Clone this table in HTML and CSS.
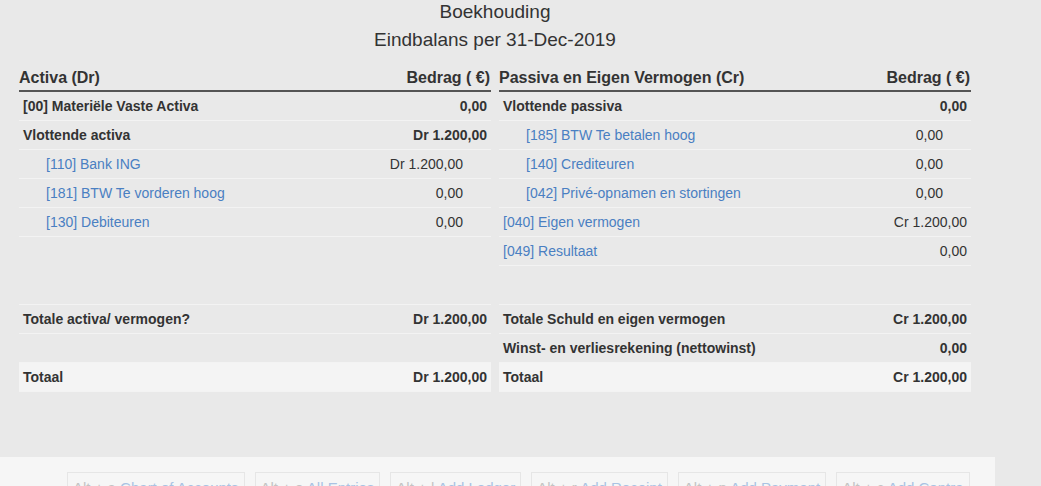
FILE: index.html
```html
<!DOCTYPE html>
<html lang="nl">
<head>
<meta charset="utf-8">
<title>Boekhouding</title>
<link rel="stylesheet" href="styles.css">
</head>
<body>
<div class="page">
  <div class="titles">
    <div class="title">Boekhouding</div>
    <div class="subtitle">Eindbalans per 31-Dec-2019</div>
  </div>

  <div class="cols">
    <table class="tbl">
      <thead>
        <tr><th class="name">Activa (Dr)</th><th class="amt">Bedrag ( €)</th></tr>
      </thead>
      <tbody>
        <tr class="grp"><td>[00] Materiële Vaste Activa</td><td class="amt">0,00</td></tr>
        <tr class="grp"><td>Vlottende activa</td><td class="amt">Dr 1.200,00</td></tr>
        <tr class="sub"><td><a href="#">[110] Bank ING</a></td><td class="amt">Dr 1.200,00</td></tr>
        <tr class="sub"><td><a href="#">[181] BTW Te vorderen hoog</a></td><td class="amt">0,00</td></tr>
        <tr class="sub"><td><a href="#">[130] Debiteuren</a></td><td class="amt">0,00</td></tr>
      </tbody>
    </table>
    <table class="tbl">
      <thead>
        <tr><th class="name">Passiva en Eigen Vermogen (Cr)</th><th class="amt">Bedrag ( €)</th></tr>
      </thead>
      <tbody>
        <tr class="grp"><td>Vlottende passiva</td><td class="amt">0,00</td></tr>
        <tr class="sub"><td><a href="#">[185] BTW Te betalen hoog</a></td><td class="amt">0,00</td></tr>
        <tr class="sub"><td><a href="#">[140] Crediteuren</a></td><td class="amt">0,00</td></tr>
        <tr class="sub"><td><a href="#">[042] Privé-opnamen en stortingen</a></td><td class="amt">0,00</td></tr>
        <tr class="top"><td><a href="#">[040] Eigen vermogen</a></td><td class="amt">Cr 1.200,00</td></tr>
        <tr class="top"><td><a href="#">[049] Resultaat</a></td><td class="amt">0,00</td></tr>
      </tbody>
    </table>
  </div>

  <div class="cols totals">
    <table class="tot">
      <tbody>
        <tr><td>Totale activa/ vermogen?</td><td class="amt">Dr 1.200,00</td></tr>
        <tr><td>&nbsp;</td><td class="amt">&nbsp;</td></tr>
        <tr class="sum"><td>Totaal</td><td class="amt">Dr 1.200,00</td></tr>
      </tbody>
    </table>
    <table class="tot">
      <tbody>
        <tr><td>Totale Schuld en eigen vermogen</td><td class="amt">Cr 1.200,00</td></tr>
        <tr><td>Winst- en verliesrekening (nettowinst)</td><td class="amt">0,00</td></tr>
        <tr class="sum"><td>Totaal</td><td class="amt">Cr 1.200,00</td></tr>
      </tbody>
    </table>
  </div>
</div>

<div class="footer">
  <span class="key">Alt + a <a href="#">Chart of Accounts</a></span>
  <span class="key">Alt + e <a href="#">All Entries</a></span>
  <span class="key">Alt + l <a href="#">Add Ledger</a></span>
  <span class="key">Alt + r <a href="#">Add Receipt</a></span>
  <span class="key">Alt + p <a href="#">Add Payment</a></span>
  <span class="key">Alt + c <a href="#">Add Contra</a></span>
</div>
</body>
</html>
```

FILE: styles.css
```css
html, body {
  margin: 0;
  padding: 0;
  background: #e9e9e9;
  font-family: "Liberation Sans", Arial, sans-serif;
  color: #333;
  font-size: 14px;
  overflow: hidden;
}

.page {
  width: 952px;
  margin-left: 19px;
}

.titles {
  text-align: center;
  font-size: 19px;
  color: #333;
}
.title { line-height: 24px; }
.subtitle { line-height: 24px; margin-top: 4px; }

.cols {
  display: grid;
  grid-template-columns: 472px 472px;
  column-gap: 8px;
  align-items: start;
  margin-top: 11px;
}

.totals {
  margin-top: 38px;
}

table {
  border-collapse: collapse;
  width: 100%;
}

.tbl th {
  font-size: 16px;
  font-weight: bold;
  text-align: left;
  line-height: 20px;
  padding: 5px 1px 2px 0;
  border-bottom: 2px solid #555;
}
.tbl th.amt { text-align: right; }

td {
  line-height: 20px;
  padding: 4px 4px;
  white-space: nowrap;
}
td.amt { text-align: right; }

.tbl td {
  border-bottom: 1px solid #f3f3f3;
}

.grp td { font-weight: bold; }

.sub td:first-child { padding-left: 27px; }
.sub td.amt { padding-right: 28px; }

a {
  color: #4a7fc2;
  text-decoration: none;
}

.tot td {
  font-weight: bold;
  border-top: 1px solid #f3f3f3;
  border-bottom: 1px solid #f3f3f3;
}
.tot .sum td { background: #f4f4f4; }

.footer {
  margin-top: 65px;
  width: 928px;
  padding: 15px 0 10px 67px;
  background: #f6f6f6;
  display: flex;
  gap: 10px;
}

.key {
  border: 1px solid #e6e6e6;
  padding: 5px 5px;
  line-height: 20px;
  font-size: 15px;
  color: #c4c4c4;
  white-space: nowrap;
}
.key a { color: #a9c3e3; }
```
